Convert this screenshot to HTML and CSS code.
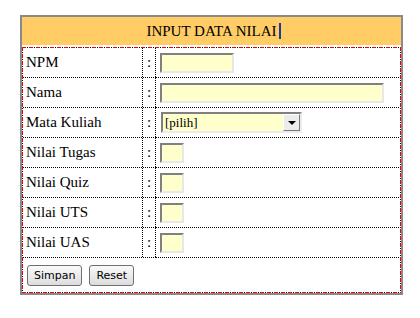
FILE: index.html
```html
<!doctype html>
<html lang="en">
  <head>
    <meta charset="UTF-8" />
    <meta name="viewport" content="width=device-width, initial-scale=1.0" />
    <title>Input Data Nilai</title>
    <link rel="stylesheet" href="styles.css">
  </head>
  <body>
    <div class="panel">
      <div class="panel-title">INPUT DATA NILAI<span class="caret"></span></div>

      <div class="frame">
        <form class="nilai-form" onsubmit="return false">
          <div class="row">
            <label class="cell label" for="npm">NPM</label>
            <span class="cell colon">:</span>
            <span class="cell field"><input class="text npm" id="npm" type="text"></span>
          </div>
          <div class="row">
            <label class="cell label" for="nama">Nama</label>
            <span class="cell colon">:</span>
            <span class="cell field"><input class="text nama" id="nama" type="text"></span>
          </div>
          <div class="row">
            <label class="cell label" for="matkul">Mata Kuliah</label>
            <span class="cell colon">:</span>
            <span class="cell field">
              <span class="select-box">
                <select id="matkul">
                  <option>[pilih]</option>
                </select>
                <span class="select-arrow"><i></i></span>
              </span>
            </span>
          </div>
          <div class="row">
            <label class="cell label" for="tugas">Nilai Tugas</label>
            <span class="cell colon">:</span>
            <span class="cell field"><input class="text num" id="tugas" type="text"></span>
          </div>
          <div class="row">
            <label class="cell label" for="quiz">Nilai Quiz</label>
            <span class="cell colon">:</span>
            <span class="cell field"><input class="text num" id="quiz" type="text"></span>
          </div>
          <div class="row">
            <label class="cell label" for="uts">Nilai UTS</label>
            <span class="cell colon">:</span>
            <span class="cell field"><input class="text num" id="uts" type="text"></span>
          </div>
          <div class="row">
            <label class="cell label" for="uas">Nilai UAS</label>
            <span class="cell colon">:</span>
            <span class="cell field"><input class="text num" id="uas" type="text"></span>
          </div>

          <div class="actions">
            <button type="submit" class="btn">Simpan</button>
            <button type="reset" class="btn">Reset</button>
          </div>
        </form>
      </div>
    </div>
  </body>
</html>
```

FILE: styles.css
```css
* {
  box-sizing: border-box;
  margin: 0;
  padding: 0;
}

body {
  font-family: "Liberation Serif", "Times New Roman", serif;
  font-size: 15px;
  color: #000;
  background: #fff;
}

.panel {
  width: 383px;
  height: 280px;
  margin: 15px 0 0 20px;
  border: 2px solid #8a8a8a;
}

.panel-title {
  height: 28px;
  line-height: 28px;
  margin-bottom: 2px;
  background: #ffcc66;
  text-align: center;
}

.caret {
  display: inline-block;
  width: 2px;
  height: 16px;
  margin: 0 -4px 0 2px;
  vertical-align: -3px;
  background: #1b3a94;
}

/* red dash-dot frame round the table */
.frame {
  padding: 1px;
  background:
    repeating-linear-gradient(90deg, #e00 0 4px, #fff 4px 5px, #000 5px 6px, #fff 6px 7px) top left / 100% 1px no-repeat,
    repeating-linear-gradient(90deg, #e00 0 4px, #fff 4px 5px, #000 5px 6px, #fff 6px 7px) bottom left / 100% 1px no-repeat,
    repeating-linear-gradient(180deg, #e00 0 4px, #fff 4px 5px, #000 5px 6px, #fff 6px 7px) top left / 1px 100% no-repeat,
    repeating-linear-gradient(180deg, #e00 0 4px, #fff 4px 5px, #000 5px 6px, #fff 6px 7px) top right / 1px 100% no-repeat;
}

.row {
  display: grid;
  grid-template-columns: 120px 13px 1fr;
  height: 30px;
}

/* crisp 1px dotted rules, drawn as gradients */
.cell {
  display: flex;
  align-items: center;
  border-bottom: 1px solid transparent;
  background: repeating-linear-gradient(90deg, #000 0 1px, transparent 1px 2px) left bottom / 100% 1px no-repeat;
  background-origin: border-box;
}

.label,
.colon {
  border-right: 1px solid transparent;
  background:
    repeating-linear-gradient(90deg, #000 0 1px, transparent 1px 2px) left bottom / 100% 1px no-repeat,
    repeating-linear-gradient(180deg, #000 0 1px, transparent 1px 2px) right top / 1px 100% no-repeat;
  background-origin: border-box;
}

.label {
  padding-left: 3px;
}

.colon {
  justify-content: center;
}

.field {
  padding-left: 4px;
}

.text {
  height: 20px;
  border: 2px solid;
  border-color: #808080 #e8e8e8 #e8e8e8 #808080;
  background: #ffffcc;
  font: 13px "Liberation Serif", serif;
  outline: none;
}

.npm {
  width: 74px;
}

.nama {
  width: 224px;
}

.num {
  width: 24px;
}

.select-box {
  display: inline-flex;
  width: 141px;
  height: 21px;
  margin-left: 1px;
  border: 2px solid;
  border-color: #808080 #ececec #ececec #808080;
  background: #ffffcc;
}

.select-box select {
  flex: 1;
  min-width: 0;
  appearance: none;
  -webkit-appearance: none;
  border: 0;
  padding-left: 2px;
  background: transparent;
  font-family: "Liberation Serif", "Times New Roman", serif;
  font-size: 13px;
  color: #000;
  outline: none;
}

.select-arrow {
  display: flex;
  align-items: center;
  justify-content: center;
  width: 17px;
  background: #ececec;
  border: 1px solid;
  border-color: #fff #7a7a7a #7a7a7a #fff;
}

.select-arrow i {
  border-top: 4px solid #000;
  border-left: 4px solid transparent;
  border-right: 4px solid transparent;
  margin-top: 1px;
}

.actions {
  display: flex;
  align-items: center;
  gap: 7px;
  height: 34px;
  padding-left: 4px;
}

.btn {
  height: 21px;
  padding: 0 6px;
  border: 1px solid #6f6f6f;
  border-radius: 3px;
  background: linear-gradient(#fafafa, #dcdcdc);
  font: 11px "DejaVu Sans", Verdana, sans-serif;
  color: #000;
  cursor: pointer;
}
```
